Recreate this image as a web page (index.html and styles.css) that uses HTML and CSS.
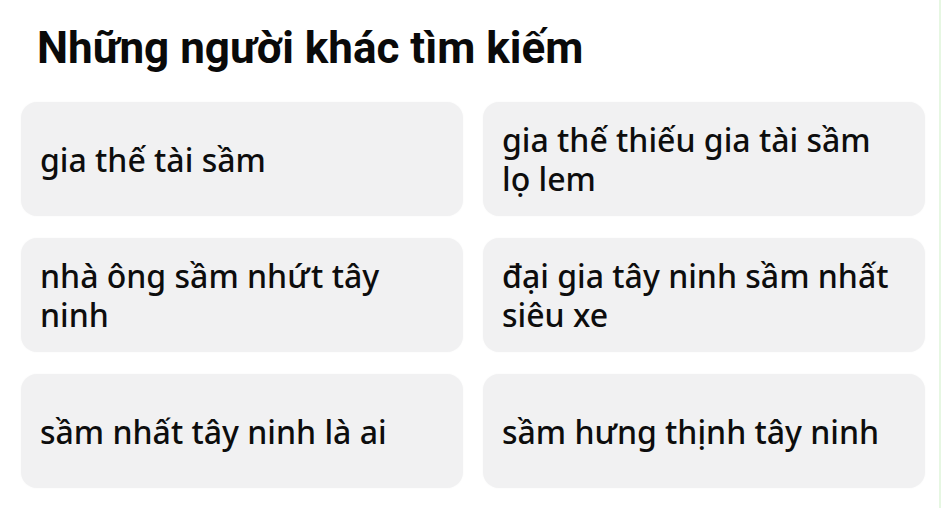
FILE: index.html
```html
<!DOCTYPE html>
<html lang="vi">
<head>
<meta charset="utf-8">
<link rel="stylesheet" href="styles.css">
</head>
<body>
<div class="page">
  <h1 class="title">Những người khác tìm kiếm</h1>
  <div class="grid">
    <div class="card">gia thế tài sầm</div>
    <div class="card">gia thế thiếu gia tài sầm lọ lem</div>
    <div class="card">nhà ông sầm nhứt tây ninh</div>
    <div class="card">đại gia tây ninh sầm nhất siêu xe</div>
    <div class="card">sầm nhất tây ninh là ai</div>
    <div class="card">sầm hưng thịnh tây ninh</div>
  </div>
</div>
<div class="edge"></div>
</body>
</html>
```
FILE: styles.css
```css
html, body {
  margin: 0;
  padding: 0;
  background: #ffffff;
}
body {
  width: 946px;
  height: 508px;
  overflow: hidden;
  font-family: Roboto, "Noto Sans", sans-serif;
  color: #0a0a0a;
}
.page {
  padding: 22px 21px 0 21px;
  width: 904px;
}
.title {
  margin: 0 0 0 16px;
  font-size: 44px;
  line-height: 52px;
  font-weight: 700;
  letter-spacing: 0;
}
.grid {
  margin-top: 28px;
  display: grid;
  grid-template-columns: 1fr 1fr;
  grid-auto-rows: 114px;
  column-gap: 20px;
  row-gap: 22px;
}
.card {
  background: #f1f1f2;
  border-radius: 16px;
  display: flex;
  align-items: center;
  padding: 0 18px 0 19px;
  font-family: "Noto Sans", Roboto, sans-serif;
  font-size: 32px;
  line-height: 39px;
  font-weight: 500;
  color: #0d0d0d;
  box-shadow: 0 0 2px rgba(0,0,0,0.04);
}
.edge {
  position: fixed;
  top: 0;
  left: 939px;
  width: 2px;
  height: 508px;
  background: #e6f7e2;
}
```
